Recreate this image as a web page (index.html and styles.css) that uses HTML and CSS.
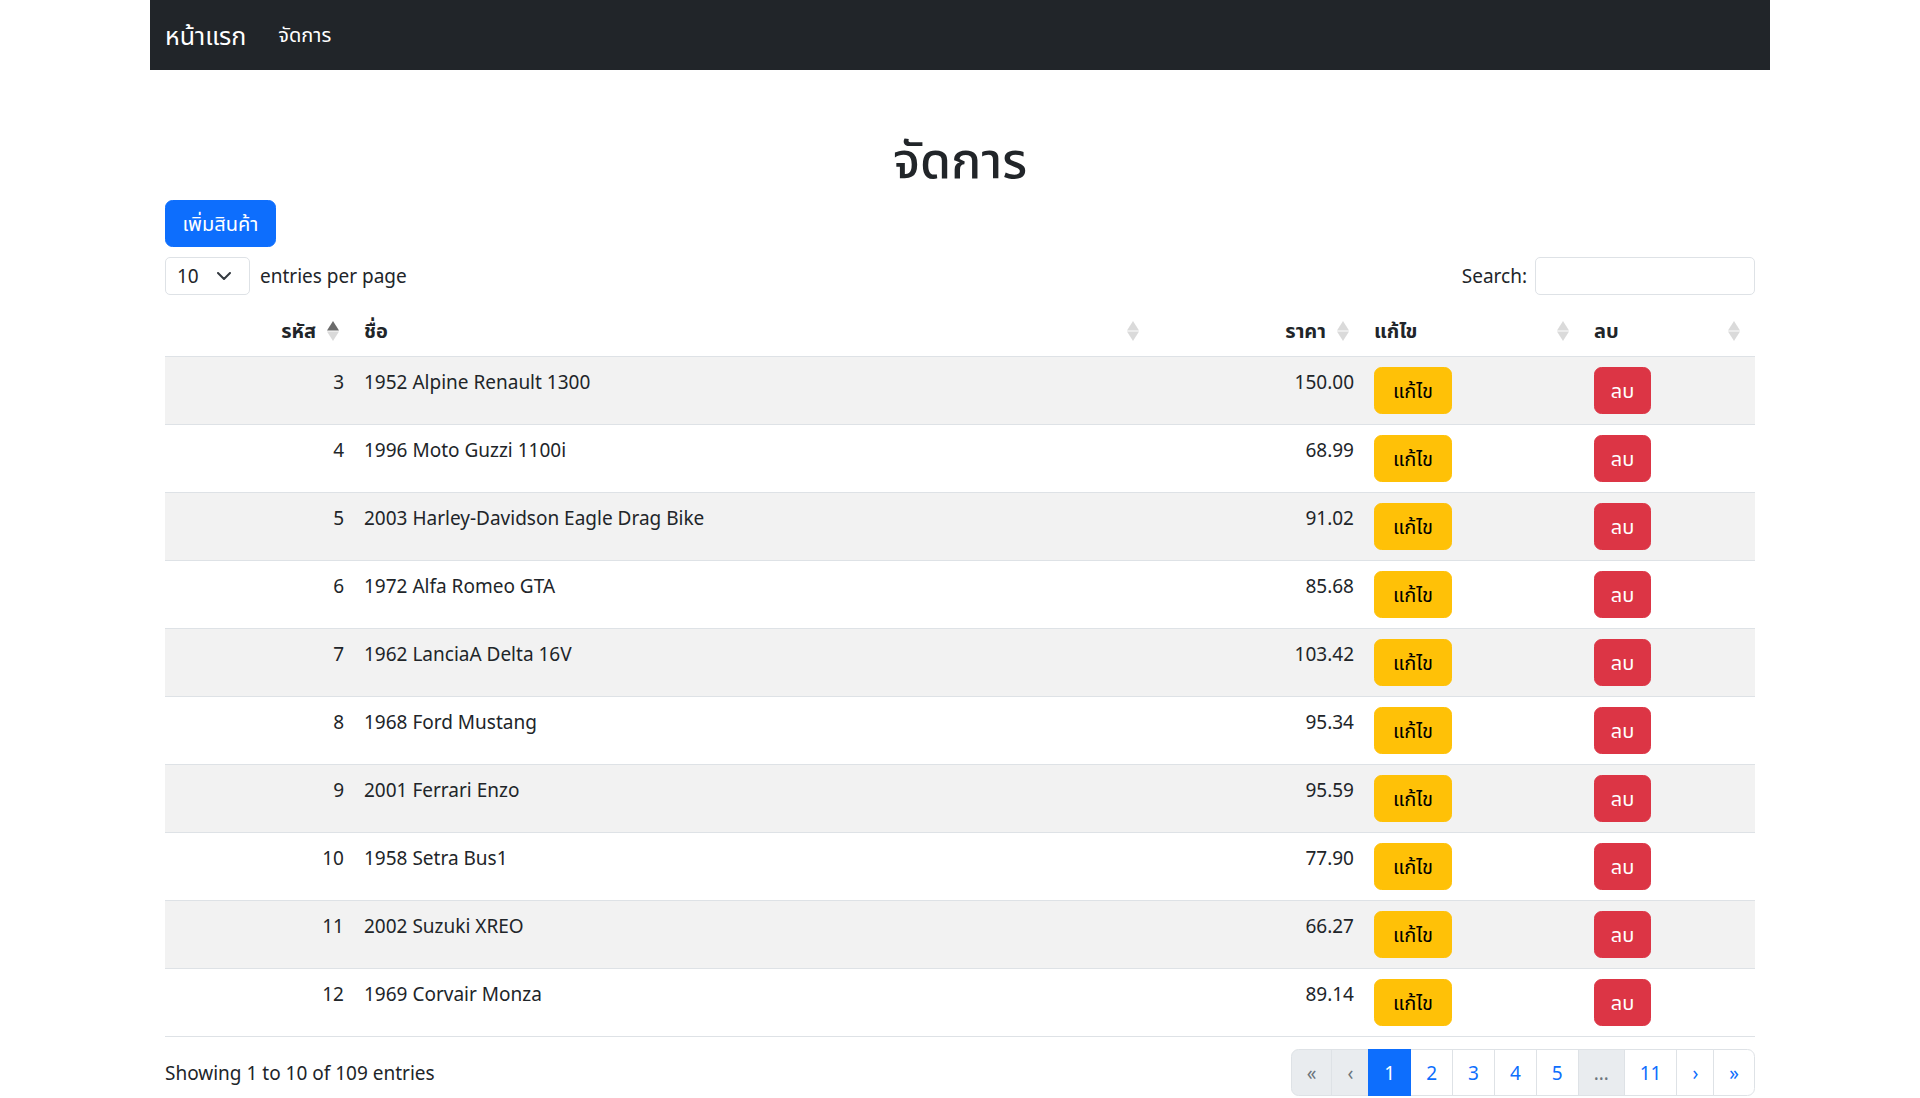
FILE: index.html
```html
<!DOCTYPE html>
<html lang="th">
<head>
<meta charset="utf-8">
<title>จัดการ</title>
<link rel="stylesheet" href="styles.css">
</head>
<body>
<div class="container">
  <nav class="navbar">
    <a class="brand" href="#">หน้าแรก</a>
    <a class="nav-link" href="#">จัดการ</a>
  </nav>
  <main class="content">
    <h1 class="title">จัดการ</h1>
    <a class="btn btn-primary btn-add" href="#">เพิ่มสินค้า</a>
    <div class="dt-top">
      <div class="dt-dropdown">
        <div class="dt-select"><span>10</span><svg width="14" height="8" viewBox="0 0 14 8"><polyline points="1,1 7,7 13,1" fill="none" stroke="#343a40" stroke-width="2" stroke-linecap="round" stroke-linejoin="round"/></svg></div>
        <span class="dt-label">entries per page</span>
      </div>
      <div class="dt-search">
        <span class="dt-label">Search:</span>
        <div class="dt-input"></div>
      </div>
    </div>
    <table class="dt-table">
      <colgroup>
        <col class="c-id"><col class="c-name"><col class="c-price"><col class="c-edit"><col class="c-del">
      </colgroup>
      <thead>
        <tr>
          <th class="end"><span class="sorter asc">รหัส<svg class="sort-icon" width="12" height="20" viewBox="0 0 12 20"><polygon class="up" points="6,0 12,9.5 0,9.5"/><polygon class="down" points="0,10.5 12,10.5 6,20"/></svg></span></th>
          <th><span class="sorter">ชื่อ<svg class="sort-icon" width="12" height="20" viewBox="0 0 12 20"><polygon class="up" points="6,0 12,9.5 0,9.5"/><polygon class="down" points="0,10.5 12,10.5 6,20"/></svg></span></th>
          <th class="end"><span class="sorter">ราคา<svg class="sort-icon" width="12" height="20" viewBox="0 0 12 20"><polygon class="up" points="6,0 12,9.5 0,9.5"/><polygon class="down" points="0,10.5 12,10.5 6,20"/></svg></span></th>
          <th><span class="sorter">แก้ไข<svg class="sort-icon" width="12" height="20" viewBox="0 0 12 20"><polygon class="up" points="6,0 12,9.5 0,9.5"/><polygon class="down" points="0,10.5 12,10.5 6,20"/></svg></span></th>
          <th><span class="sorter">ลบ<svg class="sort-icon" width="12" height="20" viewBox="0 0 12 20"><polygon class="up" points="6,0 12,9.5 0,9.5"/><polygon class="down" points="0,10.5 12,10.5 6,20"/></svg></span></th>
        </tr>
      </thead>
      <tbody>
        <tr><td class="end">3</td><td>1952 Alpine Renault 1300</td><td class="end">150.00</td><td><a class="btn btn-warning" href="#">แก้ไข</a></td><td><a class="btn btn-danger" href="#">ลบ</a></td></tr>
        <tr><td class="end">4</td><td>1996 Moto Guzzi 1100i</td><td class="end">68.99</td><td><a class="btn btn-warning" href="#">แก้ไข</a></td><td><a class="btn btn-danger" href="#">ลบ</a></td></tr>
        <tr><td class="end">5</td><td>2003 Harley-Davidson Eagle Drag Bike</td><td class="end">91.02</td><td><a class="btn btn-warning" href="#">แก้ไข</a></td><td><a class="btn btn-danger" href="#">ลบ</a></td></tr>
        <tr><td class="end">6</td><td>1972 Alfa Romeo GTA</td><td class="end">85.68</td><td><a class="btn btn-warning" href="#">แก้ไข</a></td><td><a class="btn btn-danger" href="#">ลบ</a></td></tr>
        <tr><td class="end">7</td><td>1962 LanciaA Delta 16V</td><td class="end">103.42</td><td><a class="btn btn-warning" href="#">แก้ไข</a></td><td><a class="btn btn-danger" href="#">ลบ</a></td></tr>
        <tr><td class="end">8</td><td>1968 Ford Mustang</td><td class="end">95.34</td><td><a class="btn btn-warning" href="#">แก้ไข</a></td><td><a class="btn btn-danger" href="#">ลบ</a></td></tr>
        <tr><td class="end">9</td><td>2001 Ferrari Enzo</td><td class="end">95.59</td><td><a class="btn btn-warning" href="#">แก้ไข</a></td><td><a class="btn btn-danger" href="#">ลบ</a></td></tr>
        <tr><td class="end">10</td><td>1958 Setra Bus1</td><td class="end">77.90</td><td><a class="btn btn-warning" href="#">แก้ไข</a></td><td><a class="btn btn-danger" href="#">ลบ</a></td></tr>
        <tr><td class="end">11</td><td>2002 Suzuki XREO</td><td class="end">66.27</td><td><a class="btn btn-warning" href="#">แก้ไข</a></td><td><a class="btn btn-danger" href="#">ลบ</a></td></tr>
        <tr><td class="end">12</td><td>1969 Corvair Monza</td><td class="end">89.14</td><td><a class="btn btn-warning" href="#">แก้ไข</a></td><td><a class="btn btn-danger" href="#">ลบ</a></td></tr>
      </tbody>
    </table>
    <div class="dt-bottom">
      <div class="dt-info">Showing 1 to 10 of 109 entries</div>
      <ul class="pagination">
        <li class="page disabled"><span>«</span></li>
        <li class="page disabled"><span>‹</span></li>
        <li class="page active"><span>1</span></li>
        <li class="page"><span>2</span></li>
        <li class="page"><span>3</span></li>
        <li class="page"><span>4</span></li>
        <li class="page"><span>5</span></li>
        <li class="page ellipsis"><span>…</span></li>
        <li class="page"><span>11</span></li>
        <li class="page"><span>›</span></li>
        <li class="page"><span>»</span></li>
      </ul>
    </div>
  </main>
</div>
</body>
</html>
```
FILE: styles.css
```css
* { box-sizing: border-box; }
html, body { margin: 0; padding: 0; }
body {
  font-family: "Segoe UI", "Noto Sans", "Noto Sans Thai", "Leelawadee UI", Tahoma, sans-serif;
  font-size: 19px;
  line-height: 30px;
  color: #212529;
  background: #fff;
}
a { text-decoration: none; }
.container { width: 1620px; margin: 0 auto; }

.navbar {
  height: 70px;
  background: #212529;
  display: flex;
  align-items: center;
  padding: 0 15px;
}
.brand { color: #fff; font-size: 25px; line-height: 37px; margin-right: 22px; }
.nav-link { color: #fff; padding: 0 10px; line-height: 30px; font-size: 20px; }

.content { padding: 0 15px; }
.title {
  margin: 59px 0 11px;
  text-align: center;
  font-size: 50px;
  font-weight: 500;
  line-height: 60px;
}

.btn {
  display: inline-block;
  padding: 7.5px 15px;
  border: 1px solid transparent;
  border-radius: 7.5px;
  line-height: 30px;
  font-size: 20px;
  text-align: center;
  vertical-align: top;
}
.btn-primary { background: #0d6efd; border-color: #0d6efd; color: #fff; }
.btn-warning { background: #ffc107; border-color: #ffc107; color: #000; min-width: 78px; }
.btn-danger { background: #dc3545; border-color: #dc3545; color: #fff; min-width: 57px; }
.btn-add { min-width: 111px; }

.dt-top {
  margin-top: 10px;
  display: flex;
  justify-content: space-between;
  align-items: center;
  height: 38px;
}
.dt-dropdown, .dt-search { display: flex; align-items: center; gap: 10px; }
.dt-select {
  width: 85px;
  height: 38px;
  border: 1px solid #dee2e6;
  border-radius: 5px;
  display: flex;
  align-items: center;
  justify-content: space-between;
  padding: 0 18px 0 11px;
}
.dt-input {
  width: 220px;
  height: 38px;
  border: 1px solid #dee2e6;
  border-radius: 5px;
}
.dt-search { gap: 8px; }

.dt-table {
  margin-top: 11px;
  width: 1590px;
  border-collapse: collapse;
  table-layout: fixed;
}
.c-id { width: 189px; }
.c-name { width: 800px; }
.c-price { width: 210px; }
.c-edit { width: 220px; }
.c-del { width: 171px; }
.dt-table th, .dt-table td {
  padding: 10px;
  text-align: left;
  vertical-align: top;
  border-bottom: 1px solid #dee2e6;
}
.dt-table th { font-weight: 700; font-size: 20px; }
.dt-table .end { text-align: right; }
.dt-table tbody tr:nth-child(odd) td { background: #f2f2f2; }
.sorter {
  position: relative;
  display: inline-block;
  width: 100%;
  padding-right: 28px;
}
.sort-icon {
  position: absolute;
  right: 5px;
  top: 50%;
  margin-top: -10px;
}
.sort-icon polygon { fill: #dadada; }
.sorter.asc .up { fill: #6b6b6b; }

.dt-bottom {
  margin-top: 12px;
  display: flex;
  justify-content: space-between;
  align-items: center;
}
.pagination {
  display: flex;
  list-style: none;
  margin: 0;
  padding: 0;
}
.page span {
  display: block;
  padding: 7.5px 15px;
  line-height: 30px;
  border: 1px solid #dee2e6;
  margin-left: -1px;
  color: #0d6efd;
  background: #fff;
}
.page:first-child span { margin-left: 0; border-radius: 7.5px 0 0 7.5px; }
.page:last-child span { border-radius: 0 7.5px 7.5px 0; }
.page.disabled span { background: #e9ecef; color: #6c757d; }
.page.ellipsis span { background: #e9ecef; color: #6c757d; }
.page.active span { background: #0d6efd; border-color: #0d6efd; color: #fff; position: relative; }
```
